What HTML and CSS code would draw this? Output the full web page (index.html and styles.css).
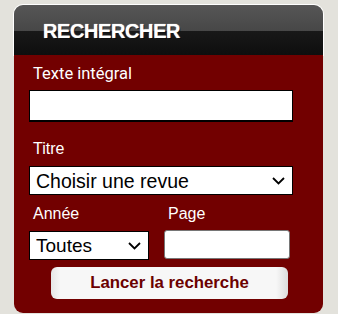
FILE: index.html
```html
<!DOCTYPE html>
<html lang="fr">
<head>
    <meta charset="UTF-8">
    <title>Rechercher</title>
    <link rel="stylesheet" href="styles.css">
</head>
<body>

<div class="search-box">
    <div class="search-head">
        <h2 class="search-title">RECHERCHER</h2>
    </div>

    <form class="search-body">
        <label class="field-label label-fulltext" for="fulltext">Texte intégral</label>
        <input type="text" id="fulltext" class="fulltext-input">

        <label class="field-label" for="revue">Titre</label>
        <select id="revue" class="revue-select">
            <option>Choisir une revue</option>
        </select>

        <div class="search-row">
            <div class="search-col col-year">
                <label class="field-label" for="annee">Année</label>
                <select id="annee" class="year-select">
                    <option>Toutes</option>
                </select>
            </div>
            <div class="search-col col-page">
                <label class="field-label" for="page">Page</label>
                <input type="text" id="page" class="page-input">
            </div>
        </div>

        <button type="button" class="search-btn">Lancer la recherche</button>
    </form>
</div>

</body>
</html>
```

FILE: styles.css
```css
body {
    margin: 0;
    background-color: #e3e2dc;
    font-family: 'Liberation Sans', Arial, sans-serif;
}

.search-box {
    width: 309px;
    margin: 5px 0 0 14px;
}

.search-head {
    height: 50px;
    border-radius: 9px 9px 0 0;
    background: linear-gradient(#565656 0, #474747 52%, #181818 53%, #0e0e0e 100%);
    box-shadow: 0 0 0 1px #fff;
}

.search-title {
    margin: 0;
    padding: 15px 0 0 29px;
    font-size: 20px;
    line-height: 22px;
    letter-spacing: -0.4px;
    font-weight: bold;
    color: #fff;
    text-shadow: 1px 1px 0 rgba(0, 0, 0, 0.6), 0 0 1px #fff;
}

.search-body {
    margin: 0;
    padding: 0 30px 14px 15px;
    background-color: #720000;
    border-radius: 0 0 9px 9px;
}

.field-label {
    display: block;
    margin: 0 0 7px 4px;
    font-size: 16px;
    line-height: 20px;
    color: #fff;
}

.label-fulltext {
    padding-top: 9px;
    margin-bottom: 6px;
    font-family: Roboto, sans-serif;
    font-size: 16.5px;
}

.fulltext-input {
    display: block;
    box-sizing: border-box;
    width: 264px;
    height: 32px;
    margin: 0 0 17px;
    border: 1px solid #000;
    border-bottom-width: 2px;
    background: #fff;
}

.revue-select,
.year-select {
    display: block;
    box-sizing: border-box;
    height: 29px;
    margin: 0;
    padding: 0 24px 0 6px;
    border: 1px solid #000;
    border-radius: 0;
    appearance: none;
    -webkit-appearance: none;
    background-color: #fff;
    background-image: url("data:image/svg+xml,%3Csvg xmlns='http://www.w3.org/2000/svg' width='13' height='8' viewBox='0 0 13 8'%3E%3Cpath d='M1 1l5.5 5.5L12 1' fill='none' stroke='%23000' stroke-width='1.8'/%3E%3C/svg%3E");
    background-repeat: no-repeat;
    background-position: right 7px center;
    color: #000;
    font-family: 'Liberation Sans', Arial, sans-serif;
    font-size: 19.5px;
}

.revue-select {
    width: 264px;
}

.search-row {
    display: flex;
    gap: 15px;
    margin-top: 9px;
}

.year-select {
    width: 120px;
    font-size: 19px;
}

.page-input {
    display: block;
    box-sizing: border-box;
    width: 126px;
    height: 29px;
    margin: -1px 0 0;
    border: 1px solid #767676;
    border-radius: 3px;
    background: #fff;
}

.search-btn {
    display: block;
    width: 237px;
    height: 32px;
    margin: 7px 0 0 22px;
    border: none;
    border-radius: 6px;
    background: linear-gradient(to right, #e6e6e6 0, #f7f7f7 4%, #f7f7f7 95%, #dcdcdc 100%);
    color: #6b0000;
    font-family: 'Liberation Sans', Arial, sans-serif;
    font-size: 16.8px;
    font-weight: bold;
    cursor: pointer;
}
```
